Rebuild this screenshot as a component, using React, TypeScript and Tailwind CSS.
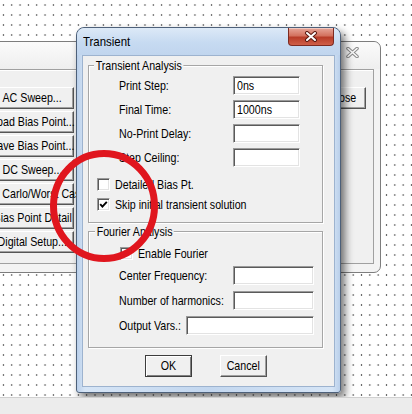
import React from "react";

type TxtProps = { children: React.ReactNode; center?: boolean };

// labels in the shot are squeezed horizontally, so scale the text box
function Txt({ children, center = false }: TxtProps) {
	return (
		<span
			className={`inline-block whitespace-nowrap scale-x-[0.82] ${
				center ? "origin-center" : "origin-left"
			}`}
		>
			{children}
		</span>
	);
}

function Field({ value = "", className = "" }: { value?: string; className?: string }) {
	return (
		<div
			className={`h-[19px] bg-white border border-[#9a9a9a] border-r-white border-b-white shadow-[inset_1px_1px_0_#5a5a5a,inset_-1px_-1px_0_#e3e3e3] pl-[3px] leading-[17px] ${className}`}
		>
			<Txt>{value}</Txt>
		</div>
	);
}

function Check({ checked = false }: { checked?: boolean }) {
	return (
		<div className="w-[13px] h-[13px] shrink-0 flex items-center justify-center bg-white border border-[#9a9a9a] border-r-white border-b-white shadow-[inset_1px_1px_0_#5a5a5a,inset_-1px_-1px_0_#e3e3e3]">
			{checked && (
				<svg width="9" height="9" viewBox="0 0 9 9">
					<path d="M1.2 4.2 L3.4 6.6 L7.8 1.8" stroke="#000" strokeWidth="1.9" fill="none" />
				</svg>
			)}
		</div>
	);
}

function Btn({ label, def = false }: { label: string; def?: boolean }) {
	return (
		<div
			className={`w-[47px] h-[22px] flex items-center justify-center bg-[#f0f0f0] ${
				def
					? "border border-[#3c3c3c] shadow-[inset_1px_1px_0_#fff,inset_-1px_-1px_0_#808080]"
					: "border border-t-white border-l-white border-r-[#555] border-b-[#555] shadow-[inset_-1px_-1px_0_#a0a0a0]"
			}`}
		>
			<Txt center>{label}</Txt>
		</div>
	);
}

function SideBtn({ label }: { label: string }) {
	return (
		<div className="w-[83px] h-[22px] flex items-center justify-center bg-[#f0f0f0] border border-t-white border-l-white border-r-[#555] border-b-[#555] shadow-[inset_-1px_-1px_0_#a0a0a0]">
			<Txt center>{label}</Txt>
		</div>
	);
}

const sideButtons = [
	"AC Sweep...",
	"Load Bias Point...",
	"Save Bias Point...",
	"DC Sweep...",
	"Monte Carlo/Worst Case...",
	"Bias Point Detail",
	"Digital Setup...",
];

export default function App() {
	return (
		<div className="relative w-[412px] h-[414px] overflow-hidden flex flex-col bg-white text-[13px] text-black font-['Liberation_Sans',Arial,sans-serif]">
			{/* desktop canvas with the dot grid */}
			<div className="relative h-[397px] shrink-0 overflow-hidden bg-[radial-gradient(circle,#6a6a6a_0.7px,transparent_1.1px)] bg-[size:8.33px_10px] bg-[position:-0.77px_0px]">
				{/* analysis setup dialog, behind */}
				<div className="absolute left-[-30px] top-[41px] w-[411px] h-[232px] rounded-[7px] border border-[#7d7d7d] bg-[#f3f3f3] flex flex-col">
					<div className="relative h-[27px] shrink-0 rounded-t-[7px] bg-[linear-gradient(#fbfbfb,#eeeeee)]">
						<svg className="absolute right-[21px] top-[5px]" width="13" height="11" viewBox="0 0 13 11">
							<path d="M2 1.5 L11 9.5 M11 1.5 L2 9.5" stroke="#8a8a8a" strokeWidth="3.6" strokeLinecap="round" />
							<path d="M2 1.5 L11 9.5 M11 1.5 L2 9.5" stroke="#fafafa" strokeWidth="1.6" strokeLinecap="round" />
						</svg>
					</div>
					<div className="ml-[6px] mr-[6px] h-[195px] border border-[#a0a0a0] bg-[#f0f0f0] shadow-[inset_1px_1px_0_#fff] flex justify-between">
						<div className="ml-[13px] mt-[17px] flex flex-col gap-[2px]">
							{sideButtons.map((b) => (
								<SideBtn key={b} label={b} />
							))}
						</div>
						<div className="mt-[17px] mr-[7px] w-[46px] h-[22px] flex items-center justify-center bg-[#f0f0f0] border border-t-white border-l-white border-r-[#555] border-b-[#555] shadow-[inset_-1px_-1px_0_#a0a0a0]">
							<Txt center>Close</Txt>
						</div>
					</div>
				</div>

				{/* Transient dialog */}
				<div className="absolute left-[76px] top-[27px] w-[265px] h-[366px] rounded-t-[8px] rounded-b-[3px] border border-[#4d6079] bg-[linear-gradient(90deg,#b9cfea,#d6e5f6_3%,#c3d7ef_50%,#d6e5f6_97%,#b9cfea)] shadow-[4px_5px_9px_rgba(0,0,0,0.55)] flex flex-col">
					<div className="relative h-[27px] shrink-0 flex items-center pl-[6px] rounded-t-[8px] bg-[linear-gradient(#dce9f7,#c6daf1_55%,#c0d5ee)]">
						<span className="inline-block origin-left scale-x-[0.88] whitespace-nowrap text-[13px]">Transient</span>
						<div className="absolute right-[6px] top-0 w-[46px] h-[18px] rounded-b-[4px] border border-t-0 border-[#7d2a20] bg-[linear-gradient(#e7a699,#d3725f_45%,#b83c28_55%,#cf5f48)] shadow-[inset_0_1px_0_rgba(255,255,255,0.4)] flex items-center justify-center">
							<svg width="14" height="11" viewBox="0 0 14 11">
								<path d="M3 2 L11 9 M11 2 L3 9" stroke="#5a1a12" strokeWidth="4" strokeLinecap="round" />
								<path d="M3 2 L11 9 M11 2 L3 9" stroke="#ffffff" strokeWidth="2" strokeLinecap="round" />
							</svg>
						</div>
					</div>

					<div className="mx-[5px] mb-[5px] flex-1 border border-[#9db3cf] bg-[#f0f0f0] flex flex-col">
						{/* Transient Analysis group */}
						<div className="relative ml-[5px] mr-[11px] mt-[9px] h-[158px] border border-[#a6a6a6] shadow-[inset_1px_1px_0_#fff,1px_1px_0_#fff]">
							<div className="absolute left-[5px] -top-[8px] px-[2px] leading-[15px] bg-[#f0f0f0] origin-left scale-x-[0.82] whitespace-nowrap">
								Transient Analysis
							</div>
							<div className="pt-[10px] pl-[30px] flex flex-col gap-[5px]">
								{[
									["Print Step:", "0ns"],
									["Final Time:", "1000ns"],
									["No-Print Delay:", ""],
									["Step Ceiling:", ""],
								].map(([label, value]) => (
									<div key={label} className="flex items-center h-[19px]">
										<div className="w-[114px]">
											<Txt>{label}</Txt>
										</div>
										<Field value={value} className="w-[67px]" />
									</div>
								))}
							</div>
							<div className="mt-[11px] pl-[8px] flex flex-col gap-[7px]">
								<div className="flex items-center gap-[5px] h-[13px]">
									<Check />
									<Txt>Detailed Bias Pt.</Txt>
								</div>
								<div className="flex items-center gap-[5px] h-[13px]">
									<Check checked />
									<Txt>Skip initial transient solution</Txt>
								</div>
							</div>
						</div>

						{/* Fourier Analysis group */}
						<div className="relative ml-[5px] mr-[11px] mt-[8px] h-[117px] border border-[#a6a6a6] shadow-[inset_1px_1px_0_#fff,1px_1px_0_#fff]">
							<div className="absolute left-[6px] -top-[8px] px-[2px] leading-[15px] bg-[#f0f0f0] origin-left scale-x-[0.82] whitespace-nowrap">
								Fourier Analysis
							</div>
							<div className="pt-[15px] pl-[31px] flex items-center gap-[5px] h-[28px]">
								<Check />
								<Txt>Enable Fourier</Txt>
							</div>
							<div className="mt-[6px] pl-[30px] flex flex-col gap-[6px]">
								<div className="flex items-center h-[19px]">
									<div className="w-[114px]">
										<Txt>Center Frequency:</Txt>
									</div>
									<Field className="w-[81px]" />
								</div>
								<div className="flex items-center h-[19px]">
									<div className="w-[114px]">
										<Txt>Number of harmonics:</Txt>
									</div>
									<Field className="w-[81px]" />
								</div>
								<div className="flex items-center h-[19px]">
									<div className="w-[67px]">
										<Txt>Output Vars.:</Txt>
									</div>
									<Field className="w-[128px]" />
								</div>
							</div>
						</div>

						<div className="mt-[7px] pl-[62px] flex gap-[28px]">
							<Btn label="OK" def />
							<Btn label="Cancel" />
						</div>
					</div>
				</div>
			</div>

			{/* status strip */}
			<div className="flex-1 bg-[#ececec] border-t border-[#d0d0d0]" />

			{/* red marker circle drawn over the shot */}
			<svg className="absolute left-0 top-0 pointer-events-none" width="412" height="414" viewBox="0 0 412 414">
				<ellipse cx="104" cy="206" rx="50.5" ry="52.5" fill="none" stroke="#e0161e" strokeWidth="7" />
			</svg>
		</div>
	);
}
